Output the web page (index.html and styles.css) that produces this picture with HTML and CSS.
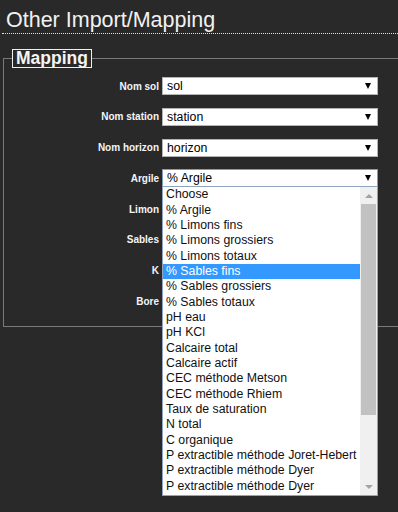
FILE: index.html
```html
<!DOCTYPE html>
<html lang="fr">
<head>
    <meta charset="UTF-8">
    <meta name="viewport" content="width=device-width, initial-scale=1.0">
    <title>Other Import/Mapping</title>
    <link rel="stylesheet" href="styles.css">
</head>
<body>
    <h1 class="page-title">Other Import/Mapping</h1>

    <div class="mapping">
        <h2 class="mapping-legend">Mapping</h2>
        <div class="form-grid">
            <label class="field-label">Nom sol</label>
            <div class="select"><span>sol</span><i class="arrow"></i></div>

            <label class="field-label">Nom station</label>
            <div class="select"><span>station</span><i class="arrow"></i></div>

            <label class="field-label">Nom horizon</label>
            <div class="select"><span>horizon</span><i class="arrow"></i></div>

            <label class="field-label">Argile</label>
            <div class="select focused">
                <span>% Argile</span><i class="arrow"></i>
                <!-- liste ouverte -->
                <div class="dropdown">
                    <ul class="options">
                        <li>Choose</li>
                        <li>% Argile</li>
                        <li>% Limons fins</li>
                        <li>% Limons grossiers</li>
                        <li>% Limons totaux</li>
                        <li class="hover">% Sables fins</li>
                        <li>% Sables grossiers</li>
                        <li>% Sables totaux</li>
                        <li>pH eau</li>
                        <li>pH KCl</li>
                        <li>Calcaire total</li>
                        <li>Calcaire actif</li>
                        <li>CEC méthode Metson</li>
                        <li>CEC méthode Rhiem</li>
                        <li>Taux de saturation</li>
                        <li>N total</li>
                        <li>C organique</li>
                        <li>P extractible méthode Joret-Hebert</li>
                        <li>P extractible méthode Dyer</li>
                        <li>P extractible méthode Dyer</li>
                    </ul>
                    <div class="scrollbar">
                        <div class="sb-btn"><i class="sb-up"></i></div>
                        <div class="sb-thumb"></div>
                        <div class="sb-space"></div>
                        <div class="sb-btn"><i class="sb-down"></i></div>
                    </div>
                </div>
            </div>

            <!-- selects masqués par la liste ouverte -->
            <label class="field-label">Limon</label>
            <div class="select"><i class="arrow"></i></div>

            <label class="field-label">Sables</label>
            <div class="select"><i class="arrow"></i></div>

            <label class="field-label">K</label>
            <div class="select"><i class="arrow"></i></div>

            <label class="field-label">Bore</label>
            <div class="select"><i class="arrow"></i></div>
        </div>
    </div>
</body>
</html>
```

FILE: styles.css
```css
html {
    height: 100%;
}
body {
    background-color: #292929;
    font-family: "Liberation Sans", Arial, sans-serif;
    color: #f2f2f2;
    margin: 0;
    padding: 8px 0 0 2px;
    min-height: 100%;
    box-sizing: border-box;
}

.page-title {
    font-size: 21.5px;
    font-weight: normal;
    line-height: 24px;
    margin: 0;
    padding: 0 0 1px 4px;
    border-bottom: 1px dotted #e0e0e0;
}

/* Bloc mapping (bord droit hors cadre) */
.mapping {
    margin: 24px 0 0 1px;
    padding: 0 0 15px 8px;
    border: 1px solid #7a7a7a;
    border-right: none;
}
.mapping-legend {
    display: block;
    width: fit-content;
    margin: -10px 0 0 0;
    font-size: 17.5px;
    font-weight: bold;
    line-height: 17px;
    padding: 0 3px;
    border: 1px solid #f0f0f0;
    background: #292929;
    color: #f4f4f4;
}

.form-grid {
    display: grid;
    grid-template-columns: 147px 216px;
    column-gap: 3px;
    row-gap: 12.8px;
    padding-top: 9px;
    align-items: center;
}
.field-label {
    font-size: 10px;
    font-weight: bold;
    text-align: right;
    color: #f2f5f8;
}

/* Faux select */
.select {
    position: relative;
    height: 18px;
    box-sizing: border-box;
    background: #fff;
    border: 1px solid #b4b4b4;
    color: #000;
    font-size: 12.3px;
    line-height: 15.33px;
    padding: 1px 0 0 4px;
}
.select.focused {
    border-color: #7f9db9;
}
.arrow {
    position: absolute;
    right: 6px;
    top: 5px;
    width: 0;
    height: 0;
    border-left: 3px solid transparent;
    border-right: 3px solid transparent;
    border-top: 6px solid #000;
}

/* Liste déroulante ouverte */
.dropdown {
    position: absolute;
    top: 100%;
    left: -1px;
    width: 216px;
    height: 310px;
    box-sizing: border-box;
    background: #fff;
    border: 1px solid #8fa4c0;
    display: flex;
    z-index: 10;
}
.options {
    list-style: none;
    margin: 0;
    padding: 0;
    flex: 1;
    overflow: hidden;
}
.options li {
    padding-left: 3px;
    height: 15.33px;
    white-space: nowrap;
    color: #111;
}
.options li.hover {
    background: #3399ff;
    color: #fff;
}

.scrollbar {
    width: 17px;
    background: #f0f0f0;
    display: flex;
    flex-direction: column;
}
.sb-btn {
    height: 17px;
    display: flex;
    justify-content: center;
    align-items: center;
}
.sb-up, .sb-down {
    width: 0;
    height: 0;
    border-left: 4px solid transparent;
    border-right: 4px solid transparent;
}
.sb-up {
    border-bottom: 4px solid #a3a3a3;
}
.sb-down {
    border-top: 4px solid #a3a3a3;
}
.sb-thumb {
    height: 211px;
    margin: 0 1px;
    background: #c1c1c1;
}
.sb-space {
    flex: 1;
}
```
